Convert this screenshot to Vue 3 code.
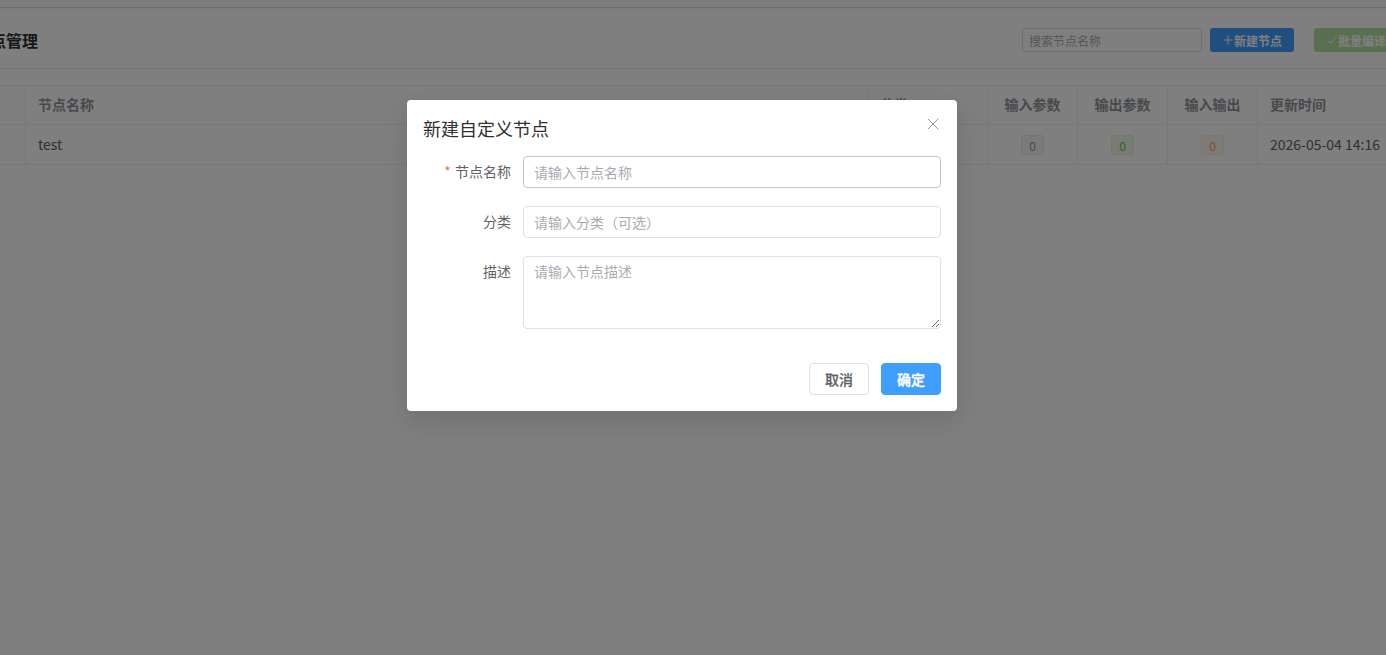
<script setup>
const counts = [
  { v: 0, c: 'gray' },
  { v: 0, c: 'lime' },
  { v: 0, c: 'orange' },
]
</script>

<template>
  <div class="page">
    <div class="topbar"></div>
    <div class="content">
      <header class="head">
        <h2 class="title">自定义节点管理</h2>
        <div class="tools">
          <input class="search" placeholder="搜索节点名称" />
          <button class="tb blue">
            <svg class="ic" viewBox="0 0 12 12" width="12" height="12"><path d="M6 1.5v9M1.5 6h9" stroke="#fff" stroke-width="1" fill="none" /></svg>新建节点
          </button>
          <button class="tb green">
            <svg class="ic" viewBox="0 0 12 12" width="12" height="12"><path d="M1.5 6.5l3 3 6-7" stroke="#fff" stroke-width="1" fill="none" /></svg>批量编译
          </button>
        </div>
      </header>
      <div class="table">
        <div class="row hrow">
          <div class="cell c0"></div>
          <div class="cell c1">节点名称</div>
          <div class="cell c2">分类</div>
          <div class="cell c3 ctr">输入参数</div>
          <div class="cell c3 ctr">输出参数</div>
          <div class="cell c3 ctr">输入输出</div>
          <div class="cell c4">更新时间</div>
        </div>
        <div class="row brow">
          <div class="cell c0"></div>
          <div class="cell c1 lift">test</div>
          <div class="cell c2"></div>
          <div v-for="(n, i) in counts" :key="i" class="cell c3 ctr">
            <span class="tag" :class="n.c">{{ n.v }}</span>
          </div>
          <div class="cell c4 lift">2026-05-04 14:16</div>
        </div>
      </div>
    </div>

    <div class="mask">
      <div class="dialog">
        <div class="d-head">
          <span class="d-title">新建自定义节点</span>
          <svg class="close" viewBox="0 0 12 12" width="12" height="12">
            <path d="M.8.8l10.4 10.4M11.2.8L.8 11.2" stroke="#909399" stroke-width="1" fill="none" />
          </svg>
        </div>
        <form class="form">
          <div class="item">
            <label class="lab"><i class="star">*</i> 节点名称</label>
            <input class="ctl focus" placeholder="请输入节点名称" />
          </div>
          <div class="item">
            <label class="lab">分类</label>
            <input class="ctl" placeholder="请输入分类（可选）" />
          </div>
          <div class="item">
            <label class="lab">描述</label>
            <textarea class="ctl area" placeholder="请输入节点描述"></textarea>
          </div>
        </form>
        <div class="foot">
          <button type="button" class="btn">取消</button>
          <button type="button" class="btn primary">确定</button>
        </div>
      </div>
    </div>
  </div>
</template>

<style>
html, body { margin: 0; overflow: hidden; }
</style>

<style scoped>
.page {
  position: relative;
  width: 1386px;
  height: 655px;
  overflow: hidden;
  background: #fff;
  font-family: "Noto Sans CJK SC", "Noto Sans", sans-serif;
  color: #606266;
}
.topbar {
  height: 7px;
  border-bottom: 1px solid #dcdfe6;
  background: #fafafa;
}
.content {
  width: 1420px;
  margin-left: -25px;
}
.head {
  height: 56px;
  padding-top: 4px;
  display: flex;
  align-items: center;
  justify-content: space-between;
  border-bottom: 1px solid #e4e7ed;
  box-sizing: content-box;
  background: linear-gradient(#f5f5f5, #fff 5px);
}
.title {
  margin: 0 0 0 -49px;
  font-size: 16px;
  font-weight: 700;
  color: #303133;
}
.tools {
  display: flex;
  align-items: center;
  margin-right: -3px;
}
.search {
  width: 180px;
  height: 24px;
  box-sizing: border-box;
  border: 1px solid #dcdfe6;
  border-radius: 3px;
  padding: 0 6px;
  font: 12px "Noto Sans CJK SC", sans-serif;
  outline: none;
}
.search::placeholder { color: #a8abb2; }
.tb {
  height: 24px;
  border: 0;
  border-radius: 3px;
  color: #fff;
  font: 700 12px "Noto Sans CJK SC", sans-serif;
  padding: 0;
  white-space: nowrap;
  display: flex;
  align-items: center;
  justify-content: center;
}
.ic { flex: none; }
.blue { width: 84px; margin-left: 8px; background: #409eff; }
.green { width: 84px; margin-left: 20px; background: #b3e19d; }
.table { margin-top: 16px; border-top: 1px solid #ebeef5; }
.row { display: flex; border-bottom: 1px solid #ebeef5; }
.hrow { height: 38px; font-weight: 700; font-size: 14px; color: #909399; background: #fff; }
.hrow .cell { padding-bottom: 2px; }
.brow { height: 39px; font-size: 14px; }
.cell {
  box-sizing: border-box;
  display: flex;
  align-items: center;
  padding: 0 12px;
  border-right: 1px solid #ebeef5;
  flex: none;
}
.lift { padding-bottom: 2px; }
.c0 { width: 51px; }
.c1 { width: 842px; }
.c2 { width: 120px; }
.c3 { width: 90px; }
.c4 { width: 130px; white-space: nowrap; border-right: 0; }
.ctr { justify-content: center; }
.tag {
  width: 23px;
  height: 20px;
  box-sizing: border-box;
  display: flex;
  align-items: center;
  justify-content: center;
  font-size: 12px;
  border-radius: 3px;
  border: 1px solid;
  margin-top: 1px;
}
.gray { color: #909399; background: #f4f4f5; border-color: #e9e9eb; }
.lime { color: #67c23a; background: #f0f9eb; border-color: #e1f3d8; }
.orange { color: #e6a23c; background: #fdf6ec; border-color: #faecd8; }
.mask {
  position: absolute;
  inset: 0;
  background: rgba(0, 0, 0, 0.5);
}
.dialog {
  position: absolute;
  left: 407px;
  top: 100px;
  width: 550px;
  height: 311px;
  box-sizing: border-box;
  background: #fff;
  border-radius: 4px;
  box-shadow: 0 12px 32px 4px rgba(0, 0, 0, .04), 0 8px 20px rgba(0, 0, 0, .08);
  padding: 16px;
  display: flex;
  flex-direction: column;
}
.d-head {
  display: flex;
  justify-content: space-between;
  align-items: flex-start;
  height: 24px;
  padding-bottom: 16px;
}
.d-title { font-size: 18px; line-height: 24px; color: #303133; }
.close { margin: 2px 2px 0 0; }
.form { display: flex; flex-direction: column; gap: 18px; }
.item { display: flex; align-items: flex-start; }
.lab {
  width: 100px;
  flex: none;
  box-sizing: border-box;
  padding-right: 12px;
  text-align: right;
  font-size: 14px;
  line-height: 30px;
  color: #606266;
}
.star { color: #f56c6c; font-style: normal; margin-right: 1px; }
.ctl {
  flex: 1;
  min-width: 0;
  height: 32px;
  box-sizing: border-box;
  border: 1px solid #dcdfe6;
  border-radius: 4px;
  padding: 0 10px;
  font: 14px "Noto Sans CJK SC", sans-serif;
  outline: none;
  color: #606266;
}
.ctl::placeholder { color: #a8abb2; }
.focus { border-color: #c0c4cc; }
.area { height: 73px; padding: 4px 10px; line-height: 21px; resize: vertical; }
.foot {
  margin-top: auto;
  display: flex;
  justify-content: flex-end;
  gap: 12px;
}
.btn {
  width: 60px;
  height: 32px;
  box-sizing: border-box;
  border: 1px solid #dcdfe6;
  border-radius: 4px;
  background: #fff;
  color: #606266;
  font: 500 14px "Noto Sans CJK SC", sans-serif;
  -webkit-text-stroke: 0.25px currentColor;
  padding: 0;
}
.primary { background: #409eff; border-color: #409eff; color: #fff; -webkit-text-stroke-width: 0.4px; }
</style>
